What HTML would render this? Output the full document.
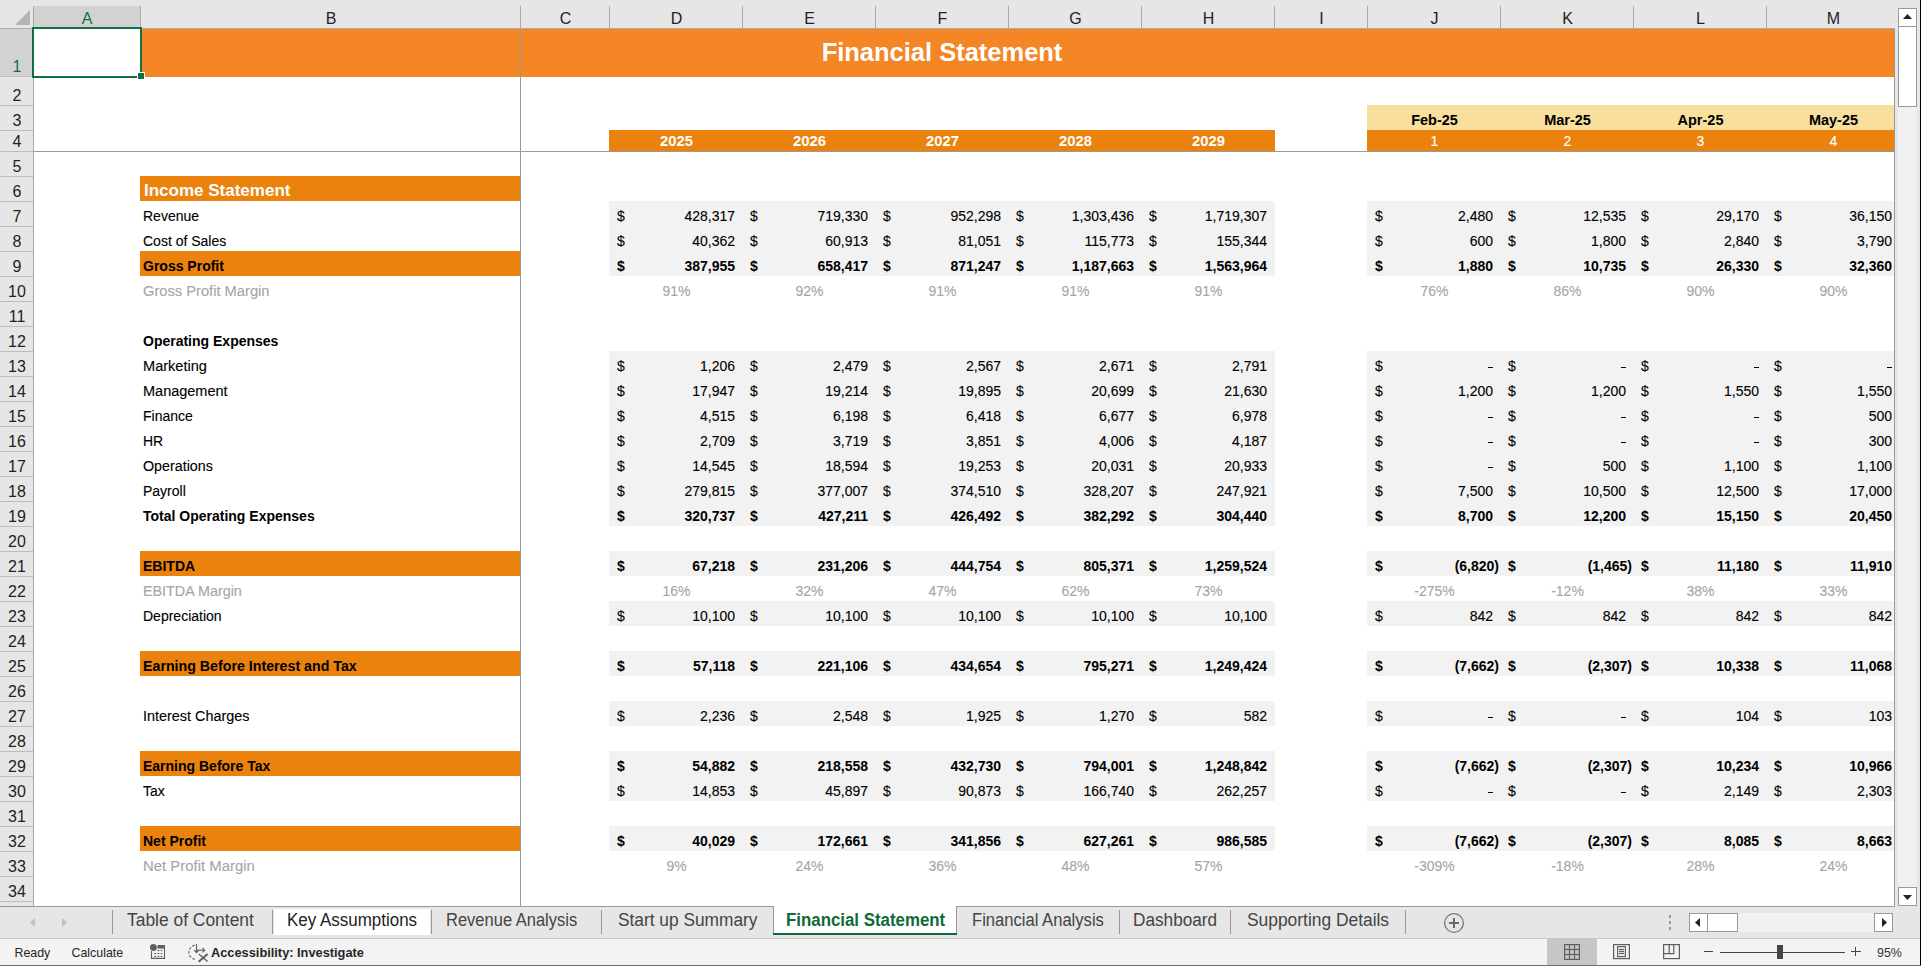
<!DOCTYPE html>
<html><head><meta charset="utf-8"><title>Financial Statement</title><style>
*{margin:0;padding:0}
html,body{width:1921px;height:966px;overflow:hidden;background:#fff;font-family:"Liberation Sans", sans-serif}
.f{position:absolute}
#sheet{position:absolute;left:0;top:0;width:1894px;height:906px;overflow:hidden}
.t{position:absolute;font-size:14px;line-height:0;white-space:nowrap;color:#000;-webkit-text-stroke:0.12px currentColor}
.t.b,.t.ih{-webkit-text-stroke:0}
.t span,.hr span,.tab span,.st span{display:inline-block;vertical-align:baseline;line-height:0}
.b{font-weight:bold}
.ih{font-size:17px;color:#fff;font-weight:bold}
.title{position:absolute;font-size:26px;font-weight:bold;color:#fff;text-align:center;white-space:nowrap;transform:scaleX(0.98);transform-origin:50% 50%}
.hc{position:absolute;height:22px;line-height:22px;font-size:16px;text-align:center}
.hr{position:absolute;font-size:16px;line-height:0;text-align:center}
.tab{position:absolute;font-size:17.6px;line-height:0;white-space:nowrap}
.st{position:absolute;font-size:12.4px;line-height:0;white-space:nowrap;color:#262626}
</style></head>
<body>
<div id="sheet"><div class="f" style="left:140px;top:29px;width:1754px;height:48px;background:#F58625"></div><div class="f" style="left:1367px;top:105px;width:527px;height:25px;background:#F8DF9D"></div><div class="f" style="left:609px;top:130px;width:666px;height:21px;background:#EA820D"></div><div class="f" style="left:1367px;top:130px;width:527px;height:21px;background:#EA820D"></div><div class="f" style="left:140px;top:176px;width:381px;height:25px;background:#EA820D"></div><div class="f" style="left:140px;top:251px;width:381px;height:25px;background:#EA820D"></div><div class="f" style="left:140px;top:551px;width:381px;height:25px;background:#EA820D"></div><div class="f" style="left:140px;top:651px;width:381px;height:25px;background:#EA820D"></div><div class="f" style="left:140px;top:751px;width:381px;height:25px;background:#EA820D"></div><div class="f" style="left:140px;top:826px;width:381px;height:25px;background:#EA820D"></div><div class="f" style="left:609px;top:201px;width:666px;height:75px;background:#F2F2F2"></div><div class="f" style="left:1367px;top:201px;width:527px;height:75px;background:#F2F2F2"></div><div class="f" style="left:609px;top:351px;width:666px;height:175px;background:#F2F2F2"></div><div class="f" style="left:1367px;top:351px;width:527px;height:175px;background:#F2F2F2"></div><div class="f" style="left:609px;top:551px;width:666px;height:25px;background:#F2F2F2"></div><div class="f" style="left:1367px;top:551px;width:527px;height:25px;background:#F2F2F2"></div><div class="f" style="left:609px;top:601px;width:666px;height:25px;background:#F2F2F2"></div><div class="f" style="left:1367px;top:601px;width:527px;height:25px;background:#F2F2F2"></div><div class="f" style="left:609px;top:651px;width:666px;height:25px;background:#F2F2F2"></div><div class="f" style="left:1367px;top:651px;width:527px;height:25px;background:#F2F2F2"></div><div class="f" style="left:609px;top:701px;width:666px;height:25px;background:#F2F2F2"></div><div class="f" style="left:1367px;top:701px;width:527px;height:25px;background:#F2F2F2"></div><div class="f" style="left:609px;top:751px;width:666px;height:50px;background:#F2F2F2"></div><div class="f" style="left:1367px;top:751px;width:527px;height:50px;background:#F2F2F2"></div><div class="f" style="left:609px;top:826px;width:666px;height:25px;background:#F2F2F2"></div><div class="f" style="left:1367px;top:826px;width:527px;height:25px;background:#F2F2F2"></div><div class="title" style="left:642px;width:600px;top:28px;height:48px;line-height:48px">Financial Statement</div><div class="t b" style="top:120px;left:1134.5px;width:600px;text-align:center;font-size:14.5px;"><span>Feb-25</span></div><div class="t" style="top:141px;left:1134.5px;width:600px;text-align:center;color:#fff;"><span>1</span></div><div class="t b" style="top:120px;left:1267.5px;width:600px;text-align:center;font-size:14.5px;"><span>Mar-25</span></div><div class="t" style="top:141px;left:1267.5px;width:600px;text-align:center;color:#fff;"><span>2</span></div><div class="t b" style="top:120px;left:1400.5px;width:600px;text-align:center;font-size:14.5px;"><span>Apr-25</span></div><div class="t" style="top:141px;left:1400.5px;width:600px;text-align:center;color:#fff;"><span>3</span></div><div class="t b" style="top:120px;left:1533.5px;width:600px;text-align:center;font-size:14.5px;"><span>May-25</span></div><div class="t" style="top:141px;left:1533.5px;width:600px;text-align:center;color:#fff;"><span>4</span></div><div class="t b" style="top:141px;left:376.5px;width:600px;text-align:center;color:#fff;font-size:14.8px;"><span>2025</span></div><div class="t b" style="top:141px;left:509.5px;width:600px;text-align:center;color:#fff;font-size:14.8px;"><span>2026</span></div><div class="t b" style="top:141px;left:642.5px;width:600px;text-align:center;color:#fff;font-size:14.8px;"><span>2027</span></div><div class="t b" style="top:141px;left:775.5px;width:600px;text-align:center;color:#fff;font-size:14.8px;"><span>2028</span></div><div class="t b" style="top:141px;left:908.5px;width:600px;text-align:center;color:#fff;font-size:14.8px;"><span>2029</span></div><div class="t ih" style="top:191px;left:144px;"><span>Income Statement</span></div><div class="t" style="top:216px;left:143px;"><span>Revenue</span></div><div class="t" style="top:216px;left:617px;"><span>$</span></div><div class="t" style="top:216px;right:1159px;"><span>428,317</span></div><div class="t" style="top:216px;left:750px;"><span>$</span></div><div class="t" style="top:216px;right:1026px;"><span>719,330</span></div><div class="t" style="top:216px;left:883px;"><span>$</span></div><div class="t" style="top:216px;right:893px;"><span>952,298</span></div><div class="t" style="top:216px;left:1016px;"><span>$</span></div><div class="t" style="top:216px;right:760px;"><span>1,303,436</span></div><div class="t" style="top:216px;left:1149px;"><span>$</span></div><div class="t" style="top:216px;right:627px;"><span>1,719,307</span></div><div class="t" style="top:216px;left:1375px;"><span>$</span></div><div class="t" style="top:216px;right:401px;"><span>2,480</span></div><div class="t" style="top:216px;left:1508px;"><span>$</span></div><div class="t" style="top:216px;right:268px;"><span>12,535</span></div><div class="t" style="top:216px;left:1641px;"><span>$</span></div><div class="t" style="top:216px;right:135px;"><span>29,170</span></div><div class="t" style="top:216px;left:1774px;"><span>$</span></div><div class="t" style="top:216px;right:2px;"><span>36,150</span></div><div class="t" style="top:241px;left:143px;"><span>Cost of Sales</span></div><div class="t" style="top:241px;left:617px;"><span>$</span></div><div class="t" style="top:241px;right:1159px;"><span>40,362</span></div><div class="t" style="top:241px;left:750px;"><span>$</span></div><div class="t" style="top:241px;right:1026px;"><span>60,913</span></div><div class="t" style="top:241px;left:883px;"><span>$</span></div><div class="t" style="top:241px;right:893px;"><span>81,051</span></div><div class="t" style="top:241px;left:1016px;"><span>$</span></div><div class="t" style="top:241px;right:760px;"><span>115,773</span></div><div class="t" style="top:241px;left:1149px;"><span>$</span></div><div class="t" style="top:241px;right:627px;"><span>155,344</span></div><div class="t" style="top:241px;left:1375px;"><span>$</span></div><div class="t" style="top:241px;right:401px;"><span>600</span></div><div class="t" style="top:241px;left:1508px;"><span>$</span></div><div class="t" style="top:241px;right:268px;"><span>1,800</span></div><div class="t" style="top:241px;left:1641px;"><span>$</span></div><div class="t" style="top:241px;right:135px;"><span>2,840</span></div><div class="t" style="top:241px;left:1774px;"><span>$</span></div><div class="t" style="top:241px;right:2px;"><span>3,790</span></div><div class="t b" style="top:266px;left:143px;"><span>Gross Profit</span></div><div class="t b" style="top:266px;left:617px;"><span>$</span></div><div class="t b" style="top:266px;right:1159px;"><span>387,955</span></div><div class="t b" style="top:266px;left:750px;"><span>$</span></div><div class="t b" style="top:266px;right:1026px;"><span>658,417</span></div><div class="t b" style="top:266px;left:883px;"><span>$</span></div><div class="t b" style="top:266px;right:893px;"><span>871,247</span></div><div class="t b" style="top:266px;left:1016px;"><span>$</span></div><div class="t b" style="top:266px;right:760px;"><span>1,187,663</span></div><div class="t b" style="top:266px;left:1149px;"><span>$</span></div><div class="t b" style="top:266px;right:627px;"><span>1,563,964</span></div><div class="t b" style="top:266px;left:1375px;"><span>$</span></div><div class="t b" style="top:266px;right:401px;"><span>1,880</span></div><div class="t b" style="top:266px;left:1508px;"><span>$</span></div><div class="t b" style="top:266px;right:268px;"><span>10,735</span></div><div class="t b" style="top:266px;left:1641px;"><span>$</span></div><div class="t b" style="top:266px;right:135px;"><span>26,330</span></div><div class="t b" style="top:266px;left:1774px;"><span>$</span></div><div class="t b" style="top:266px;right:2px;"><span>32,360</span></div><div class="t" style="top:291px;left:143px;color:#A6A6A6;transform:scaleX(1.049);transform-origin:0 0;"><span>Gross Profit Margin</span></div><div class="t" style="top:291px;left:376.5px;width:600px;text-align:center;color:#A6A6A6;"><span>91%</span></div><div class="t" style="top:291px;left:509.5px;width:600px;text-align:center;color:#A6A6A6;"><span>92%</span></div><div class="t" style="top:291px;left:642.5px;width:600px;text-align:center;color:#A6A6A6;"><span>91%</span></div><div class="t" style="top:291px;left:775.5px;width:600px;text-align:center;color:#A6A6A6;"><span>91%</span></div><div class="t" style="top:291px;left:908.5px;width:600px;text-align:center;color:#A6A6A6;"><span>91%</span></div><div class="t" style="top:291px;left:1134.5px;width:600px;text-align:center;color:#A6A6A6;"><span>76%</span></div><div class="t" style="top:291px;left:1267.5px;width:600px;text-align:center;color:#A6A6A6;"><span>86%</span></div><div class="t" style="top:291px;left:1400.5px;width:600px;text-align:center;color:#A6A6A6;"><span>90%</span></div><div class="t" style="top:291px;left:1533.5px;width:600px;text-align:center;color:#A6A6A6;"><span>90%</span></div><div class="t b" style="top:341px;left:143px;"><span>Operating Expenses</span></div><div class="t" style="top:366px;left:143px;transform:scaleX(1.04);transform-origin:0 0;"><span>Marketing</span></div><div class="t" style="top:366px;left:617px;"><span>$</span></div><div class="t" style="top:366px;right:1159px;"><span>1,206</span></div><div class="t" style="top:366px;left:750px;"><span>$</span></div><div class="t" style="top:366px;right:1026px;"><span>2,479</span></div><div class="t" style="top:366px;left:883px;"><span>$</span></div><div class="t" style="top:366px;right:893px;"><span>2,567</span></div><div class="t" style="top:366px;left:1016px;"><span>$</span></div><div class="t" style="top:366px;right:760px;"><span>2,671</span></div><div class="t" style="top:366px;left:1149px;"><span>$</span></div><div class="t" style="top:366px;right:627px;"><span>2,791</span></div><div class="t" style="top:366px;left:1375px;"><span>$</span></div><div class="f" style="left:1488px;top:367px;width:5px;height:1px;background:#000"></div><div class="t" style="top:366px;left:1508px;"><span>$</span></div><div class="f" style="left:1621px;top:367px;width:5px;height:1px;background:#000"></div><div class="t" style="top:366px;left:1641px;"><span>$</span></div><div class="f" style="left:1754px;top:367px;width:5px;height:1px;background:#000"></div><div class="t" style="top:366px;left:1774px;"><span>$</span></div><div class="f" style="left:1887px;top:367px;width:5px;height:1px;background:#000"></div><div class="t" style="top:391px;left:143px;transform:scaleX(1.035);transform-origin:0 0;"><span>Management</span></div><div class="t" style="top:391px;left:617px;"><span>$</span></div><div class="t" style="top:391px;right:1159px;"><span>17,947</span></div><div class="t" style="top:391px;left:750px;"><span>$</span></div><div class="t" style="top:391px;right:1026px;"><span>19,214</span></div><div class="t" style="top:391px;left:883px;"><span>$</span></div><div class="t" style="top:391px;right:893px;"><span>19,895</span></div><div class="t" style="top:391px;left:1016px;"><span>$</span></div><div class="t" style="top:391px;right:760px;"><span>20,699</span></div><div class="t" style="top:391px;left:1149px;"><span>$</span></div><div class="t" style="top:391px;right:627px;"><span>21,630</span></div><div class="t" style="top:391px;left:1375px;"><span>$</span></div><div class="t" style="top:391px;right:401px;"><span>1,200</span></div><div class="t" style="top:391px;left:1508px;"><span>$</span></div><div class="t" style="top:391px;right:268px;"><span>1,200</span></div><div class="t" style="top:391px;left:1641px;"><span>$</span></div><div class="t" style="top:391px;right:135px;"><span>1,550</span></div><div class="t" style="top:391px;left:1774px;"><span>$</span></div><div class="t" style="top:391px;right:2px;"><span>1,550</span></div><div class="t" style="top:416px;left:143px;"><span>Finance</span></div><div class="t" style="top:416px;left:617px;"><span>$</span></div><div class="t" style="top:416px;right:1159px;"><span>4,515</span></div><div class="t" style="top:416px;left:750px;"><span>$</span></div><div class="t" style="top:416px;right:1026px;"><span>6,198</span></div><div class="t" style="top:416px;left:883px;"><span>$</span></div><div class="t" style="top:416px;right:893px;"><span>6,418</span></div><div class="t" style="top:416px;left:1016px;"><span>$</span></div><div class="t" style="top:416px;right:760px;"><span>6,677</span></div><div class="t" style="top:416px;left:1149px;"><span>$</span></div><div class="t" style="top:416px;right:627px;"><span>6,978</span></div><div class="t" style="top:416px;left:1375px;"><span>$</span></div><div class="f" style="left:1488px;top:417px;width:5px;height:1px;background:#000"></div><div class="t" style="top:416px;left:1508px;"><span>$</span></div><div class="f" style="left:1621px;top:417px;width:5px;height:1px;background:#000"></div><div class="t" style="top:416px;left:1641px;"><span>$</span></div><div class="f" style="left:1754px;top:417px;width:5px;height:1px;background:#000"></div><div class="t" style="top:416px;left:1774px;"><span>$</span></div><div class="t" style="top:416px;right:2px;"><span>500</span></div><div class="t" style="top:441px;left:143px;"><span>HR</span></div><div class="t" style="top:441px;left:617px;"><span>$</span></div><div class="t" style="top:441px;right:1159px;"><span>2,709</span></div><div class="t" style="top:441px;left:750px;"><span>$</span></div><div class="t" style="top:441px;right:1026px;"><span>3,719</span></div><div class="t" style="top:441px;left:883px;"><span>$</span></div><div class="t" style="top:441px;right:893px;"><span>3,851</span></div><div class="t" style="top:441px;left:1016px;"><span>$</span></div><div class="t" style="top:441px;right:760px;"><span>4,006</span></div><div class="t" style="top:441px;left:1149px;"><span>$</span></div><div class="t" style="top:441px;right:627px;"><span>4,187</span></div><div class="t" style="top:441px;left:1375px;"><span>$</span></div><div class="f" style="left:1488px;top:442px;width:5px;height:1px;background:#000"></div><div class="t" style="top:441px;left:1508px;"><span>$</span></div><div class="f" style="left:1621px;top:442px;width:5px;height:1px;background:#000"></div><div class="t" style="top:441px;left:1641px;"><span>$</span></div><div class="f" style="left:1754px;top:442px;width:5px;height:1px;background:#000"></div><div class="t" style="top:441px;left:1774px;"><span>$</span></div><div class="t" style="top:441px;right:2px;"><span>300</span></div><div class="t" style="top:466px;left:143px;transform:scaleX(1.02);transform-origin:0 0;"><span>Operations</span></div><div class="t" style="top:466px;left:617px;"><span>$</span></div><div class="t" style="top:466px;right:1159px;"><span>14,545</span></div><div class="t" style="top:466px;left:750px;"><span>$</span></div><div class="t" style="top:466px;right:1026px;"><span>18,594</span></div><div class="t" style="top:466px;left:883px;"><span>$</span></div><div class="t" style="top:466px;right:893px;"><span>19,253</span></div><div class="t" style="top:466px;left:1016px;"><span>$</span></div><div class="t" style="top:466px;right:760px;"><span>20,031</span></div><div class="t" style="top:466px;left:1149px;"><span>$</span></div><div class="t" style="top:466px;right:627px;"><span>20,933</span></div><div class="t" style="top:466px;left:1375px;"><span>$</span></div><div class="f" style="left:1488px;top:467px;width:5px;height:1px;background:#000"></div><div class="t" style="top:466px;left:1508px;"><span>$</span></div><div class="t" style="top:466px;right:268px;"><span>500</span></div><div class="t" style="top:466px;left:1641px;"><span>$</span></div><div class="t" style="top:466px;right:135px;"><span>1,100</span></div><div class="t" style="top:466px;left:1774px;"><span>$</span></div><div class="t" style="top:466px;right:2px;"><span>1,100</span></div><div class="t" style="top:491px;left:143px;"><span>Payroll</span></div><div class="t" style="top:491px;left:617px;"><span>$</span></div><div class="t" style="top:491px;right:1159px;"><span>279,815</span></div><div class="t" style="top:491px;left:750px;"><span>$</span></div><div class="t" style="top:491px;right:1026px;"><span>377,007</span></div><div class="t" style="top:491px;left:883px;"><span>$</span></div><div class="t" style="top:491px;right:893px;"><span>374,510</span></div><div class="t" style="top:491px;left:1016px;"><span>$</span></div><div class="t" style="top:491px;right:760px;"><span>328,207</span></div><div class="t" style="top:491px;left:1149px;"><span>$</span></div><div class="t" style="top:491px;right:627px;"><span>247,921</span></div><div class="t" style="top:491px;left:1375px;"><span>$</span></div><div class="t" style="top:491px;right:401px;"><span>7,500</span></div><div class="t" style="top:491px;left:1508px;"><span>$</span></div><div class="t" style="top:491px;right:268px;"><span>10,500</span></div><div class="t" style="top:491px;left:1641px;"><span>$</span></div><div class="t" style="top:491px;right:135px;"><span>12,500</span></div><div class="t" style="top:491px;left:1774px;"><span>$</span></div><div class="t" style="top:491px;right:2px;"><span>17,000</span></div><div class="t b" style="top:516px;left:143px;"><span>Total Operating Expenses</span></div><div class="t b" style="top:516px;left:617px;"><span>$</span></div><div class="t b" style="top:516px;right:1159px;"><span>320,737</span></div><div class="t b" style="top:516px;left:750px;"><span>$</span></div><div class="t b" style="top:516px;right:1026px;"><span>427,211</span></div><div class="t b" style="top:516px;left:883px;"><span>$</span></div><div class="t b" style="top:516px;right:893px;"><span>426,492</span></div><div class="t b" style="top:516px;left:1016px;"><span>$</span></div><div class="t b" style="top:516px;right:760px;"><span>382,292</span></div><div class="t b" style="top:516px;left:1149px;"><span>$</span></div><div class="t b" style="top:516px;right:627px;"><span>304,440</span></div><div class="t b" style="top:516px;left:1375px;"><span>$</span></div><div class="t b" style="top:516px;right:401px;"><span>8,700</span></div><div class="t b" style="top:516px;left:1508px;"><span>$</span></div><div class="t b" style="top:516px;right:268px;"><span>12,200</span></div><div class="t b" style="top:516px;left:1641px;"><span>$</span></div><div class="t b" style="top:516px;right:135px;"><span>15,150</span></div><div class="t b" style="top:516px;left:1774px;"><span>$</span></div><div class="t b" style="top:516px;right:2px;"><span>20,450</span></div><div class="t b" style="top:566px;left:143px;"><span>EBITDA</span></div><div class="t b" style="top:566px;left:617px;"><span>$</span></div><div class="t b" style="top:566px;right:1159px;"><span>67,218</span></div><div class="t b" style="top:566px;left:750px;"><span>$</span></div><div class="t b" style="top:566px;right:1026px;"><span>231,206</span></div><div class="t b" style="top:566px;left:883px;"><span>$</span></div><div class="t b" style="top:566px;right:893px;"><span>444,754</span></div><div class="t b" style="top:566px;left:1016px;"><span>$</span></div><div class="t b" style="top:566px;right:760px;"><span>805,371</span></div><div class="t b" style="top:566px;left:1149px;"><span>$</span></div><div class="t b" style="top:566px;right:627px;"><span>1,259,524</span></div><div class="t b" style="top:566px;left:1375px;"><span>$</span></div><div class="t b" style="top:566px;right:395px;"><span>(6,820)</span></div><div class="t b" style="top:566px;left:1508px;"><span>$</span></div><div class="t b" style="top:566px;right:262px;"><span>(1,465)</span></div><div class="t b" style="top:566px;left:1641px;"><span>$</span></div><div class="t b" style="top:566px;right:135px;"><span>11,180</span></div><div class="t b" style="top:566px;left:1774px;"><span>$</span></div><div class="t b" style="top:566px;right:2px;"><span>11,910</span></div><div class="t" style="top:591px;left:143px;color:#A6A6A6;transform:scaleX(1.024);transform-origin:0 0;"><span>EBITDA Margin</span></div><div class="t" style="top:591px;left:376.5px;width:600px;text-align:center;color:#A6A6A6;"><span>16%</span></div><div class="t" style="top:591px;left:509.5px;width:600px;text-align:center;color:#A6A6A6;"><span>32%</span></div><div class="t" style="top:591px;left:642.5px;width:600px;text-align:center;color:#A6A6A6;"><span>47%</span></div><div class="t" style="top:591px;left:775.5px;width:600px;text-align:center;color:#A6A6A6;"><span>62%</span></div><div class="t" style="top:591px;left:908.5px;width:600px;text-align:center;color:#A6A6A6;"><span>73%</span></div><div class="t" style="top:591px;left:1134.5px;width:600px;text-align:center;color:#A6A6A6;"><span>-275%</span></div><div class="t" style="top:591px;left:1267.5px;width:600px;text-align:center;color:#A6A6A6;"><span>-12%</span></div><div class="t" style="top:591px;left:1400.5px;width:600px;text-align:center;color:#A6A6A6;"><span>38%</span></div><div class="t" style="top:591px;left:1533.5px;width:600px;text-align:center;color:#A6A6A6;"><span>33%</span></div><div class="t" style="top:616px;left:143px;"><span>Depreciation</span></div><div class="t" style="top:616px;left:617px;"><span>$</span></div><div class="t" style="top:616px;right:1159px;"><span>10,100</span></div><div class="t" style="top:616px;left:750px;"><span>$</span></div><div class="t" style="top:616px;right:1026px;"><span>10,100</span></div><div class="t" style="top:616px;left:883px;"><span>$</span></div><div class="t" style="top:616px;right:893px;"><span>10,100</span></div><div class="t" style="top:616px;left:1016px;"><span>$</span></div><div class="t" style="top:616px;right:760px;"><span>10,100</span></div><div class="t" style="top:616px;left:1149px;"><span>$</span></div><div class="t" style="top:616px;right:627px;"><span>10,100</span></div><div class="t" style="top:616px;left:1375px;"><span>$</span></div><div class="t" style="top:616px;right:401px;"><span>842</span></div><div class="t" style="top:616px;left:1508px;"><span>$</span></div><div class="t" style="top:616px;right:268px;"><span>842</span></div><div class="t" style="top:616px;left:1641px;"><span>$</span></div><div class="t" style="top:616px;right:135px;"><span>842</span></div><div class="t" style="top:616px;left:1774px;"><span>$</span></div><div class="t" style="top:616px;right:2px;"><span>842</span></div><div class="t b" style="top:666px;left:143px;transform:scaleX(1.015);transform-origin:0 0;"><span>Earning Before Interest and Tax</span></div><div class="t b" style="top:666px;left:617px;"><span>$</span></div><div class="t b" style="top:666px;right:1159px;"><span>57,118</span></div><div class="t b" style="top:666px;left:750px;"><span>$</span></div><div class="t b" style="top:666px;right:1026px;"><span>221,106</span></div><div class="t b" style="top:666px;left:883px;"><span>$</span></div><div class="t b" style="top:666px;right:893px;"><span>434,654</span></div><div class="t b" style="top:666px;left:1016px;"><span>$</span></div><div class="t b" style="top:666px;right:760px;"><span>795,271</span></div><div class="t b" style="top:666px;left:1149px;"><span>$</span></div><div class="t b" style="top:666px;right:627px;"><span>1,249,424</span></div><div class="t b" style="top:666px;left:1375px;"><span>$</span></div><div class="t b" style="top:666px;right:395px;"><span>(7,662)</span></div><div class="t b" style="top:666px;left:1508px;"><span>$</span></div><div class="t b" style="top:666px;right:262px;"><span>(2,307)</span></div><div class="t b" style="top:666px;left:1641px;"><span>$</span></div><div class="t b" style="top:666px;right:135px;"><span>10,338</span></div><div class="t b" style="top:666px;left:1774px;"><span>$</span></div><div class="t b" style="top:666px;right:2px;"><span>11,068</span></div><div class="t" style="top:716px;left:143px;transform:scaleX(1.028);transform-origin:0 0;"><span>Interest Charges</span></div><div class="t" style="top:716px;left:617px;"><span>$</span></div><div class="t" style="top:716px;right:1159px;"><span>2,236</span></div><div class="t" style="top:716px;left:750px;"><span>$</span></div><div class="t" style="top:716px;right:1026px;"><span>2,548</span></div><div class="t" style="top:716px;left:883px;"><span>$</span></div><div class="t" style="top:716px;right:893px;"><span>1,925</span></div><div class="t" style="top:716px;left:1016px;"><span>$</span></div><div class="t" style="top:716px;right:760px;"><span>1,270</span></div><div class="t" style="top:716px;left:1149px;"><span>$</span></div><div class="t" style="top:716px;right:627px;"><span>582</span></div><div class="t" style="top:716px;left:1375px;"><span>$</span></div><div class="f" style="left:1488px;top:717px;width:5px;height:1px;background:#000"></div><div class="t" style="top:716px;left:1508px;"><span>$</span></div><div class="f" style="left:1621px;top:717px;width:5px;height:1px;background:#000"></div><div class="t" style="top:716px;left:1641px;"><span>$</span></div><div class="t" style="top:716px;right:135px;"><span>104</span></div><div class="t" style="top:716px;left:1774px;"><span>$</span></div><div class="t" style="top:716px;right:2px;"><span>103</span></div><div class="t b" style="top:766px;left:143px;"><span>Earning Before Tax</span></div><div class="t b" style="top:766px;left:617px;"><span>$</span></div><div class="t b" style="top:766px;right:1159px;"><span>54,882</span></div><div class="t b" style="top:766px;left:750px;"><span>$</span></div><div class="t b" style="top:766px;right:1026px;"><span>218,558</span></div><div class="t b" style="top:766px;left:883px;"><span>$</span></div><div class="t b" style="top:766px;right:893px;"><span>432,730</span></div><div class="t b" style="top:766px;left:1016px;"><span>$</span></div><div class="t b" style="top:766px;right:760px;"><span>794,001</span></div><div class="t b" style="top:766px;left:1149px;"><span>$</span></div><div class="t b" style="top:766px;right:627px;"><span>1,248,842</span></div><div class="t b" style="top:766px;left:1375px;"><span>$</span></div><div class="t b" style="top:766px;right:395px;"><span>(7,662)</span></div><div class="t b" style="top:766px;left:1508px;"><span>$</span></div><div class="t b" style="top:766px;right:262px;"><span>(2,307)</span></div><div class="t b" style="top:766px;left:1641px;"><span>$</span></div><div class="t b" style="top:766px;right:135px;"><span>10,234</span></div><div class="t b" style="top:766px;left:1774px;"><span>$</span></div><div class="t b" style="top:766px;right:2px;"><span>10,966</span></div><div class="t" style="top:791px;left:143px;"><span>Tax</span></div><div class="t" style="top:791px;left:617px;"><span>$</span></div><div class="t" style="top:791px;right:1159px;"><span>14,853</span></div><div class="t" style="top:791px;left:750px;"><span>$</span></div><div class="t" style="top:791px;right:1026px;"><span>45,897</span></div><div class="t" style="top:791px;left:883px;"><span>$</span></div><div class="t" style="top:791px;right:893px;"><span>90,873</span></div><div class="t" style="top:791px;left:1016px;"><span>$</span></div><div class="t" style="top:791px;right:760px;"><span>166,740</span></div><div class="t" style="top:791px;left:1149px;"><span>$</span></div><div class="t" style="top:791px;right:627px;"><span>262,257</span></div><div class="t" style="top:791px;left:1375px;"><span>$</span></div><div class="f" style="left:1488px;top:792px;width:5px;height:1px;background:#000"></div><div class="t" style="top:791px;left:1508px;"><span>$</span></div><div class="f" style="left:1621px;top:792px;width:5px;height:1px;background:#000"></div><div class="t" style="top:791px;left:1641px;"><span>$</span></div><div class="t" style="top:791px;right:135px;"><span>2,149</span></div><div class="t" style="top:791px;left:1774px;"><span>$</span></div><div class="t" style="top:791px;right:2px;"><span>2,303</span></div><div class="t b" style="top:841px;left:143px;"><span>Net Profit</span></div><div class="t b" style="top:841px;left:617px;"><span>$</span></div><div class="t b" style="top:841px;right:1159px;"><span>40,029</span></div><div class="t b" style="top:841px;left:750px;"><span>$</span></div><div class="t b" style="top:841px;right:1026px;"><span>172,661</span></div><div class="t b" style="top:841px;left:883px;"><span>$</span></div><div class="t b" style="top:841px;right:893px;"><span>341,856</span></div><div class="t b" style="top:841px;left:1016px;"><span>$</span></div><div class="t b" style="top:841px;right:760px;"><span>627,261</span></div><div class="t b" style="top:841px;left:1149px;"><span>$</span></div><div class="t b" style="top:841px;right:627px;"><span>986,585</span></div><div class="t b" style="top:841px;left:1375px;"><span>$</span></div><div class="t b" style="top:841px;right:395px;"><span>(7,662)</span></div><div class="t b" style="top:841px;left:1508px;"><span>$</span></div><div class="t b" style="top:841px;right:262px;"><span>(2,307)</span></div><div class="t b" style="top:841px;left:1641px;"><span>$</span></div><div class="t b" style="top:841px;right:135px;"><span>8,085</span></div><div class="t b" style="top:841px;left:1774px;"><span>$</span></div><div class="t b" style="top:841px;right:2px;"><span>8,663</span></div><div class="t" style="top:866px;left:143px;color:#A6A6A6;transform:scaleX(1.065);transform-origin:0 0;"><span>Net Profit Margin</span></div><div class="t" style="top:866px;left:376.5px;width:600px;text-align:center;color:#A6A6A6;"><span>9%</span></div><div class="t" style="top:866px;left:509.5px;width:600px;text-align:center;color:#A6A6A6;"><span>24%</span></div><div class="t" style="top:866px;left:642.5px;width:600px;text-align:center;color:#A6A6A6;"><span>36%</span></div><div class="t" style="top:866px;left:775.5px;width:600px;text-align:center;color:#A6A6A6;"><span>48%</span></div><div class="t" style="top:866px;left:908.5px;width:600px;text-align:center;color:#A6A6A6;"><span>57%</span></div><div class="t" style="top:866px;left:1134.5px;width:600px;text-align:center;color:#A6A6A6;"><span>-309%</span></div><div class="t" style="top:866px;left:1267.5px;width:600px;text-align:center;color:#A6A6A6;"><span>-18%</span></div><div class="t" style="top:866px;left:1400.5px;width:600px;text-align:center;color:#A6A6A6;"><span>28%</span></div><div class="t" style="top:866px;left:1533.5px;width:600px;text-align:center;color:#A6A6A6;"><span>24%</span></div></div><div class="f" style="left:33px;top:151px;width:1861px;height:1px;background:#9a9a9a"></div><div class="f" style="left:520px;top:29px;width:1px;height:877px;background:#9a9a9a"></div>
<div class="f" style="left:0;top:0;width:1921px;height:28px;background:#E6E6E6"></div><div class="f" style="left:0;top:28px;width:34px;height:878px;background:#E6E6E6"></div><div class="f" style="left:34px;top:6px;width:106px;height:22px;background:#D2D2D2"></div><div class="f" style="left:0;top:29px;width:32px;height:47px;background:#D2D2D2"></div><svg class="f" style="left:0;top:0" width="33" height="28"><polygon points="30,10 30,25 15,25" fill="#B4B4B4"/></svg><div class="f" style="left:0;top:28px;width:1895px;height:1px;background:#ABABAB"></div><div class="f" style="left:33px;top:6px;width:1px;height:900px;background:#ABABAB"></div><div class="f" style="left:140px;top:6px;width:1px;height:22px;background:#ABABAB"></div><div class="f" style="left:520px;top:6px;width:1px;height:22px;background:#ABABAB"></div><div class="f" style="left:609px;top:6px;width:1px;height:22px;background:#ABABAB"></div><div class="f" style="left:742px;top:6px;width:1px;height:22px;background:#ABABAB"></div><div class="f" style="left:875px;top:6px;width:1px;height:22px;background:#ABABAB"></div><div class="f" style="left:1008px;top:6px;width:1px;height:22px;background:#ABABAB"></div><div class="f" style="left:1141px;top:6px;width:1px;height:22px;background:#ABABAB"></div><div class="f" style="left:1274px;top:6px;width:1px;height:22px;background:#ABABAB"></div><div class="f" style="left:1367px;top:6px;width:1px;height:22px;background:#ABABAB"></div><div class="f" style="left:1500px;top:6px;width:1px;height:22px;background:#ABABAB"></div><div class="f" style="left:1633px;top:6px;width:1px;height:22px;background:#ABABAB"></div><div class="f" style="left:1766px;top:6px;width:1px;height:22px;background:#ABABAB"></div><div class="hc" style="left:-13.0px;top:8px;width:200px;color:#107040">A</div><div class="hc" style="left:231.0px;top:8px;width:200px;color:#222">B</div><div class="hc" style="left:465.5px;top:8px;width:200px;color:#222">C</div><div class="hc" style="left:576.5px;top:8px;width:200px;color:#222">D</div><div class="hc" style="left:709.5px;top:8px;width:200px;color:#222">E</div><div class="hc" style="left:842.5px;top:8px;width:200px;color:#222">F</div><div class="hc" style="left:975.5px;top:8px;width:200px;color:#222">G</div><div class="hc" style="left:1108.5px;top:8px;width:200px;color:#222">H</div><div class="hc" style="left:1221.5px;top:8px;width:200px;color:#222">I</div><div class="hc" style="left:1334.5px;top:8px;width:200px;color:#222">J</div><div class="hc" style="left:1467.5px;top:8px;width:200px;color:#222">K</div><div class="hc" style="left:1600.5px;top:8px;width:200px;color:#222">L</div><div class="hc" style="left:1733.5px;top:8px;width:200px;color:#222">M</div><div class="f" style="left:0;top:76px;width:33px;height:1px;background:#BDBDBD"></div><div class="hr" style="left:1px;top:67px;width:32px;color:#107040"><span>1</span></div><div class="f" style="left:0;top:105px;width:33px;height:1px;background:#BDBDBD"></div><div class="hr" style="left:1px;top:96px;width:32px;color:#222"><span>2</span></div><div class="f" style="left:0;top:130px;width:33px;height:1px;background:#BDBDBD"></div><div class="hr" style="left:1px;top:121px;width:32px;color:#222"><span>3</span></div><div class="f" style="left:0;top:151px;width:33px;height:1px;background:#BDBDBD"></div><div class="hr" style="left:1px;top:142px;width:32px;color:#222"><span>4</span></div><div class="f" style="left:0;top:176px;width:33px;height:1px;background:#BDBDBD"></div><div class="hr" style="left:1px;top:167px;width:32px;color:#222"><span>5</span></div><div class="f" style="left:0;top:201px;width:33px;height:1px;background:#BDBDBD"></div><div class="hr" style="left:1px;top:192px;width:32px;color:#222"><span>6</span></div><div class="f" style="left:0;top:226px;width:33px;height:1px;background:#BDBDBD"></div><div class="hr" style="left:1px;top:217px;width:32px;color:#222"><span>7</span></div><div class="f" style="left:0;top:251px;width:33px;height:1px;background:#BDBDBD"></div><div class="hr" style="left:1px;top:242px;width:32px;color:#222"><span>8</span></div><div class="f" style="left:0;top:276px;width:33px;height:1px;background:#BDBDBD"></div><div class="hr" style="left:1px;top:267px;width:32px;color:#222"><span>9</span></div><div class="f" style="left:0;top:301px;width:33px;height:1px;background:#BDBDBD"></div><div class="hr" style="left:1px;top:292px;width:32px;color:#222"><span>10</span></div><div class="f" style="left:0;top:326px;width:33px;height:1px;background:#BDBDBD"></div><div class="hr" style="left:1px;top:317px;width:32px;color:#222"><span>11</span></div><div class="f" style="left:0;top:351px;width:33px;height:1px;background:#BDBDBD"></div><div class="hr" style="left:1px;top:342px;width:32px;color:#222"><span>12</span></div><div class="f" style="left:0;top:376px;width:33px;height:1px;background:#BDBDBD"></div><div class="hr" style="left:1px;top:367px;width:32px;color:#222"><span>13</span></div><div class="f" style="left:0;top:401px;width:33px;height:1px;background:#BDBDBD"></div><div class="hr" style="left:1px;top:392px;width:32px;color:#222"><span>14</span></div><div class="f" style="left:0;top:426px;width:33px;height:1px;background:#BDBDBD"></div><div class="hr" style="left:1px;top:417px;width:32px;color:#222"><span>15</span></div><div class="f" style="left:0;top:451px;width:33px;height:1px;background:#BDBDBD"></div><div class="hr" style="left:1px;top:442px;width:32px;color:#222"><span>16</span></div><div class="f" style="left:0;top:476px;width:33px;height:1px;background:#BDBDBD"></div><div class="hr" style="left:1px;top:467px;width:32px;color:#222"><span>17</span></div><div class="f" style="left:0;top:501px;width:33px;height:1px;background:#BDBDBD"></div><div class="hr" style="left:1px;top:492px;width:32px;color:#222"><span>18</span></div><div class="f" style="left:0;top:526px;width:33px;height:1px;background:#BDBDBD"></div><div class="hr" style="left:1px;top:517px;width:32px;color:#222"><span>19</span></div><div class="f" style="left:0;top:551px;width:33px;height:1px;background:#BDBDBD"></div><div class="hr" style="left:1px;top:542px;width:32px;color:#222"><span>20</span></div><div class="f" style="left:0;top:576px;width:33px;height:1px;background:#BDBDBD"></div><div class="hr" style="left:1px;top:567px;width:32px;color:#222"><span>21</span></div><div class="f" style="left:0;top:601px;width:33px;height:1px;background:#BDBDBD"></div><div class="hr" style="left:1px;top:592px;width:32px;color:#222"><span>22</span></div><div class="f" style="left:0;top:626px;width:33px;height:1px;background:#BDBDBD"></div><div class="hr" style="left:1px;top:617px;width:32px;color:#222"><span>23</span></div><div class="f" style="left:0;top:651px;width:33px;height:1px;background:#BDBDBD"></div><div class="hr" style="left:1px;top:642px;width:32px;color:#222"><span>24</span></div><div class="f" style="left:0;top:676px;width:33px;height:1px;background:#BDBDBD"></div><div class="hr" style="left:1px;top:667px;width:32px;color:#222"><span>25</span></div><div class="f" style="left:0;top:701px;width:33px;height:1px;background:#BDBDBD"></div><div class="hr" style="left:1px;top:692px;width:32px;color:#222"><span>26</span></div><div class="f" style="left:0;top:726px;width:33px;height:1px;background:#BDBDBD"></div><div class="hr" style="left:1px;top:717px;width:32px;color:#222"><span>27</span></div><div class="f" style="left:0;top:751px;width:33px;height:1px;background:#BDBDBD"></div><div class="hr" style="left:1px;top:742px;width:32px;color:#222"><span>28</span></div><div class="f" style="left:0;top:776px;width:33px;height:1px;background:#BDBDBD"></div><div class="hr" style="left:1px;top:767px;width:32px;color:#222"><span>29</span></div><div class="f" style="left:0;top:801px;width:33px;height:1px;background:#BDBDBD"></div><div class="hr" style="left:1px;top:792px;width:32px;color:#222"><span>30</span></div><div class="f" style="left:0;top:826px;width:33px;height:1px;background:#BDBDBD"></div><div class="hr" style="left:1px;top:817px;width:32px;color:#222"><span>31</span></div><div class="f" style="left:0;top:851px;width:33px;height:1px;background:#BDBDBD"></div><div class="hr" style="left:1px;top:842px;width:32px;color:#222"><span>32</span></div><div class="f" style="left:0;top:876px;width:33px;height:1px;background:#BDBDBD"></div><div class="hr" style="left:1px;top:867px;width:32px;color:#222"><span>33</span></div><div class="f" style="left:0;top:901px;width:33px;height:1px;background:#BDBDBD"></div><div class="hr" style="left:1px;top:892px;width:32px;color:#222"><span>34</span></div><div class="f" style="left:1894px;top:28px;width:1px;height:879px;background:#9A9A9A"></div><div class="f" style="left:0;top:906px;width:1895px;height:1px;background:#9A9A9A"></div>
<div class="f" style="left:32px;top:27px;width:110px;height:51px;box-sizing:border-box;border:2px solid #107040"></div><div class="f" style="left:138px;top:73px;width:6px;height:6px;background:#107040;border:1px solid #fff;box-sizing:content-box;left:137px;top:72px"></div>
<div class="f" style="left:1895px;top:0;width:25px;height:907px;background:#E6E6E6"></div><div class="f" style="left:1898px;top:27px;width:19px;height:879px;background:#F1F1F1"></div><div class="f" style="left:1920px;top:0;width:1px;height:966px;background:#000"></div><div class="f" style="left:1898px;top:8px;width:19px;height:19px;background:#fff;box-sizing:border-box;border:1px solid #999"></div><svg class="f" style="left:1898px;top:8px" width="19" height="19"><polygon points="5,11 14,11 9.5,6" fill="#222"/></svg><div class="f" style="left:1898px;top:26px;width:19px;height:81px;background:#fff;box-sizing:border-box;border:1px solid #999"></div><div class="f" style="left:1898px;top:887px;width:19px;height:19px;background:#fff;box-sizing:border-box;border:1px solid #999"></div><svg class="f" style="left:1898px;top:887px" width="19" height="19"><polygon points="5,8 14,8 9.5,13" fill="#222"/></svg>
<div class="f" style="left:0;top:907px;width:1920px;height:31px;background:#E6E6E6"></div><div class="f" style="left:0;top:938px;width:1920px;height:1px;background:#C8C8C8"></div><svg class="f" style="left:0;top:907px" width="100" height="31"><polygon points="35,11 35,20 30,15.5" fill="#C0C0C0"/><polygon points="62,11 62,20 67,15.5" fill="#C0C0C0"/></svg><div class="f" style="left:112px;top:910px;width:1px;height:24px;background:#999"></div><div class="f" style="left:272px;top:910px;width:1px;height:24px;background:#999"></div><div class="f" style="left:431px;top:910px;width:1px;height:24px;background:#999"></div><div class="f" style="left:601px;top:910px;width:1px;height:24px;background:#999"></div><div class="f" style="left:1119px;top:910px;width:1px;height:24px;background:#999"></div><div class="f" style="left:1230px;top:910px;width:1px;height:24px;background:#999"></div><div class="f" style="left:1405px;top:910px;width:1px;height:24px;background:#999"></div><div class="f" style="left:274px;top:909px;width:156px;height:26px;background:#fff"></div><div class="f" style="left:773px;top:906px;width:184px;height:29px;background:#fff"></div><div class="f" style="left:773px;top:906px;width:1px;height:29px;background:#999"></div><div class="f" style="left:956px;top:906px;width:1px;height:29px;background:#999"></div><div class="f" style="left:773px;top:933px;width:184px;height:2px;background:#0E6B37"></div><div class="tab" style="left:127px;top:920px;color:#444;transform:scaleX(0.99);transform-origin:0 0"><span>Table of Content</span></div><div class="tab" style="left:286.5px;top:920px;color:#222;transform:scaleX(0.964);transform-origin:0 0"><span>Key Assumptions</span></div><div class="tab" style="left:446px;top:920px;color:#444;transform:scaleX(0.938);transform-origin:0 0"><span>Revenue Analysis</span></div><div class="tab" style="left:618px;top:920px;color:#444;transform:scaleX(0.984);transform-origin:0 0"><span>Start up Summary</span></div><div class="tab b" style="left:785.5px;top:920px;color:#0E6B37;transform:scaleX(0.958);transform-origin:0 0"><span>Financial Statement</span></div><div class="tab" style="left:972px;top:920px;color:#444;transform:scaleX(0.943);transform-origin:0 0"><span>Financial Analysis</span></div><div class="tab" style="left:1133px;top:920px;color:#444;transform:scaleX(0.977);transform-origin:0 0"><span>Dashboard</span></div><div class="tab" style="left:1247px;top:920px;color:#444;transform:scaleX(0.988);transform-origin:0 0"><span>Supporting Details</span></div><svg class="f" style="left:1443px;top:912px" width="22" height="22"><circle cx="11" cy="11" r="9.4" fill="none" stroke="#777" stroke-width="1.3"/><line x1="6" y1="11" x2="16" y2="11" stroke="#666" stroke-width="1.9"/><line x1="11" y1="6" x2="11" y2="16" stroke="#666" stroke-width="1.9"/></svg><svg class="f" style="left:1667px;top:914px" width="6" height="18"><rect x="2" y="1" width="2" height="3" fill="#999"/><rect x="2" y="7" width="2" height="3" fill="#999"/><rect x="2" y="13" width="2" height="3" fill="#999"/></svg><div class="f" style="left:1689px;top:913px;width:203px;height:19px;background:#F1F1F1"></div><div class="f" style="left:1689px;top:913px;width:19px;height:19px;background:#fff;box-sizing:border-box;border:1px solid #999"></div><svg class="f" style="left:1689px;top:913px" width="19" height="19"><polygon points="11,5 11,14 6,9.5" fill="#222"/></svg><div class="f" style="left:1707px;top:913px;width:31px;height:19px;background:#fff;box-sizing:border-box;border:1px solid #999"></div><div class="f" style="left:1874px;top:913px;width:19px;height:19px;background:#fff;box-sizing:border-box;border:1px solid #999"></div><svg class="f" style="left:1874px;top:913px" width="19" height="19"><polygon points="8,5 8,14 13,9.5" fill="#222"/></svg>
<div class="f" style="left:0;top:939px;width:1920px;height:27px;background:#F3F3F3"></div><div class="f" style="left:0;top:965px;width:1921px;height:1px;background:#6E6E6E"></div><div class="st" style="left:14.5px;top:953px"><span>Ready</span></div><div class="st" style="left:71.5px;top:953px"><span>Calculate</span></div><svg class="f" style="left:150px;top:943px" width="18" height="18"><g fill="none" stroke="#5F5F5F" stroke-width="1.1"><polyline points="1.5,8 1.5,15.4 14.5,15.4 14.5,2.5 8,2.5"/></g><rect x="7.5" y="2" width="7.5" height="3.6" fill="#5F5F5F"/><circle cx="3.3" cy="4.4" r="3.5" fill="#5F5F5F"/><g fill="#5F5F5F"><rect x="7.4" y="7" width="1.9" height="1.1"/><rect x="10.6" y="7" width="1.6" height="1.1"/><rect x="4.3" y="10" width="1.8" height="1.1"/><rect x="7.4" y="10" width="1.9" height="1.1"/><rect x="10.6" y="10" width="1.6" height="1.1"/><rect x="4.3" y="12.9" width="1.8" height="1.1"/><rect x="7.4" y="12.9" width="1.9" height="1.1"/><rect x="10.6" y="12.9" width="1.6" height="1.1"/></g></svg><svg class="f" style="left:186px;top:942px" width="24" height="24"><path d="M8.7 3.4 A7 7 0 0 0 9.7 17.3" fill="none" stroke="#5F5F5F" stroke-width="1.1" stroke-dasharray="2.6 1.6"/><g fill="none" stroke="#5F5F5F" stroke-width="1.1"><line x1="10.5" y1="2" x2="10.5" y2="10.4"/><polyline points="8.1,8.2 10.5,10.6 12.9,8.2"/><line x1="10.5" y1="8.2" x2="18.6" y2="8.2"/><polyline points="16.4,6 18.7,8.2 16.4,10.4"/></g><line x1="12.8" y1="12" x2="21.6" y2="19.6" stroke="#5F5F5F" stroke-width="1.3"/><line x1="12.6" y1="19.8" x2="21.6" y2="12" stroke="#5F5F5F" stroke-width="2"/></svg><div class="st b" style="left:211px;top:953px;font-size:12.8px"><span>Accessibility: Investigate</span></div><div class="f" style="left:1547px;top:939px;width:50px;height:26px;background:#C6C6C6"></div><svg class="f" style="left:1564px;top:944px" width="16" height="16"><g fill="none" stroke="#5F5F5F" stroke-width="1.2"><rect x="0.6" y="0.6" width="14.8" height="14.8"/><line x1="5.5" y1="0" x2="5.5" y2="16"/><line x1="10.5" y1="0" x2="10.5" y2="16"/><line x1="0" y1="5.5" x2="16" y2="5.5"/><line x1="0" y1="10.5" x2="16" y2="10.5"/></g></svg><svg class="f" style="left:1613px;top:944px" width="17" height="16"><g fill="none" stroke="#5F5F5F" stroke-width="1.2"><rect x="0.6" y="0.6" width="15.8" height="14"/><rect x="4.6" y="2.6" width="7.8" height="10"/><line x1="6" y1="5.5" x2="11" y2="5.5"/><line x1="6" y1="7.5" x2="11" y2="7.5"/><line x1="6" y1="9.5" x2="11" y2="9.5"/></g></svg><svg class="f" style="left:1663px;top:944px" width="17" height="16"><g fill="none" stroke="#5F5F5F" stroke-width="1.2"><rect x="0.6" y="0.6" width="15.8" height="14"/><polyline points="0.6,9.6 10.8,9.6 10.8,0.6"/><line x1="6.2" y1="0.6" x2="6.2" y2="9.6"/></g></svg><div class="f" style="left:1704px;top:951px;width:9px;height:1px;background:#444"></div><div class="f" style="left:1720px;top:951.5px;width:125px;height:1.5px;background:#444"></div><div class="f" style="left:1777px;top:945px;width:6px;height:14px;background:#444"></div><div class="f" style="left:1851px;top:951px;width:10px;height:1px;background:#444"></div><div class="f" style="left:1855px;top:947px;width:1px;height:9px;background:#444"></div><div class="st" style="left:1877px;top:953px;color:#333"><span>95%</span></div>
</body></html>
